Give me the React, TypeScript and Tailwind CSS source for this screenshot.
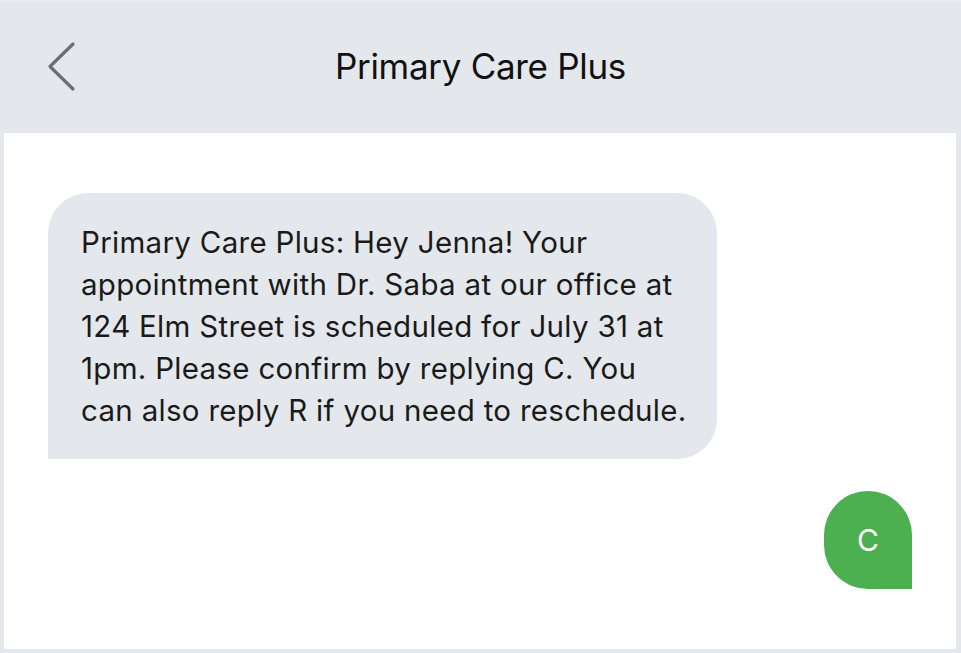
import React from "react";

export default function App() {
  return (
    <div
      className="w-[961px] h-[653px] bg-[#e4e7eb] flex flex-col"
      style={{ fontFamily: "Inter, 'Noto Sans', sans-serif" }}
    >
      <div className="h-[133px] shrink-0 border-t border-[#ececee] relative flex items-center justify-center">
        <svg
          className="absolute left-[46px] top-[40px]"
          width="32"
          height="52"
          viewBox="0 0 32 52"
          fill="none"
        >
          <path
            d="M27 3 L4 25.5 L27 48"
            stroke="#6b6e73"
            strokeWidth="3.2"
            strokeLinecap="round"
            strokeLinejoin="round"
          />
        </svg>
        <div className="text-[35px] leading-none text-[#111] tracking-[-0.3px] -mt-[1px]">Primary Care Plus</div>
      </div>
      <div className="flex-1 ml-[4px] mr-[5px] mb-[4px] bg-white px-[44px] pt-[60px] flex flex-col">
        <div className="w-[669px] bg-[#e4e7eb] rounded-[40px] rounded-bl-none pl-[33px] pr-[10px] py-[28px] text-[29.5px] tracking-[0.3px] leading-[42px] text-[#1a1a1a] whitespace-nowrap">
          Primary Care Plus: Hey Jenna! Your
          <br />
          appointment with Dr. Saba at our office at
          <br />
          124 Elm Street is scheduled for July 31 at
          <br />
          1pm. Please confirm by replying C. You
          <br />
          can also reply R if you need to reschedule.
        </div>
        <div className="flex justify-end mt-[32px]">
          <div className="w-[88px] h-[98px] bg-[#4caf50] rounded-[44px] rounded-br-none flex items-center justify-center text-white text-[30px]">
            C
          </div>
        </div>
      </div>
    </div>
  );
}
